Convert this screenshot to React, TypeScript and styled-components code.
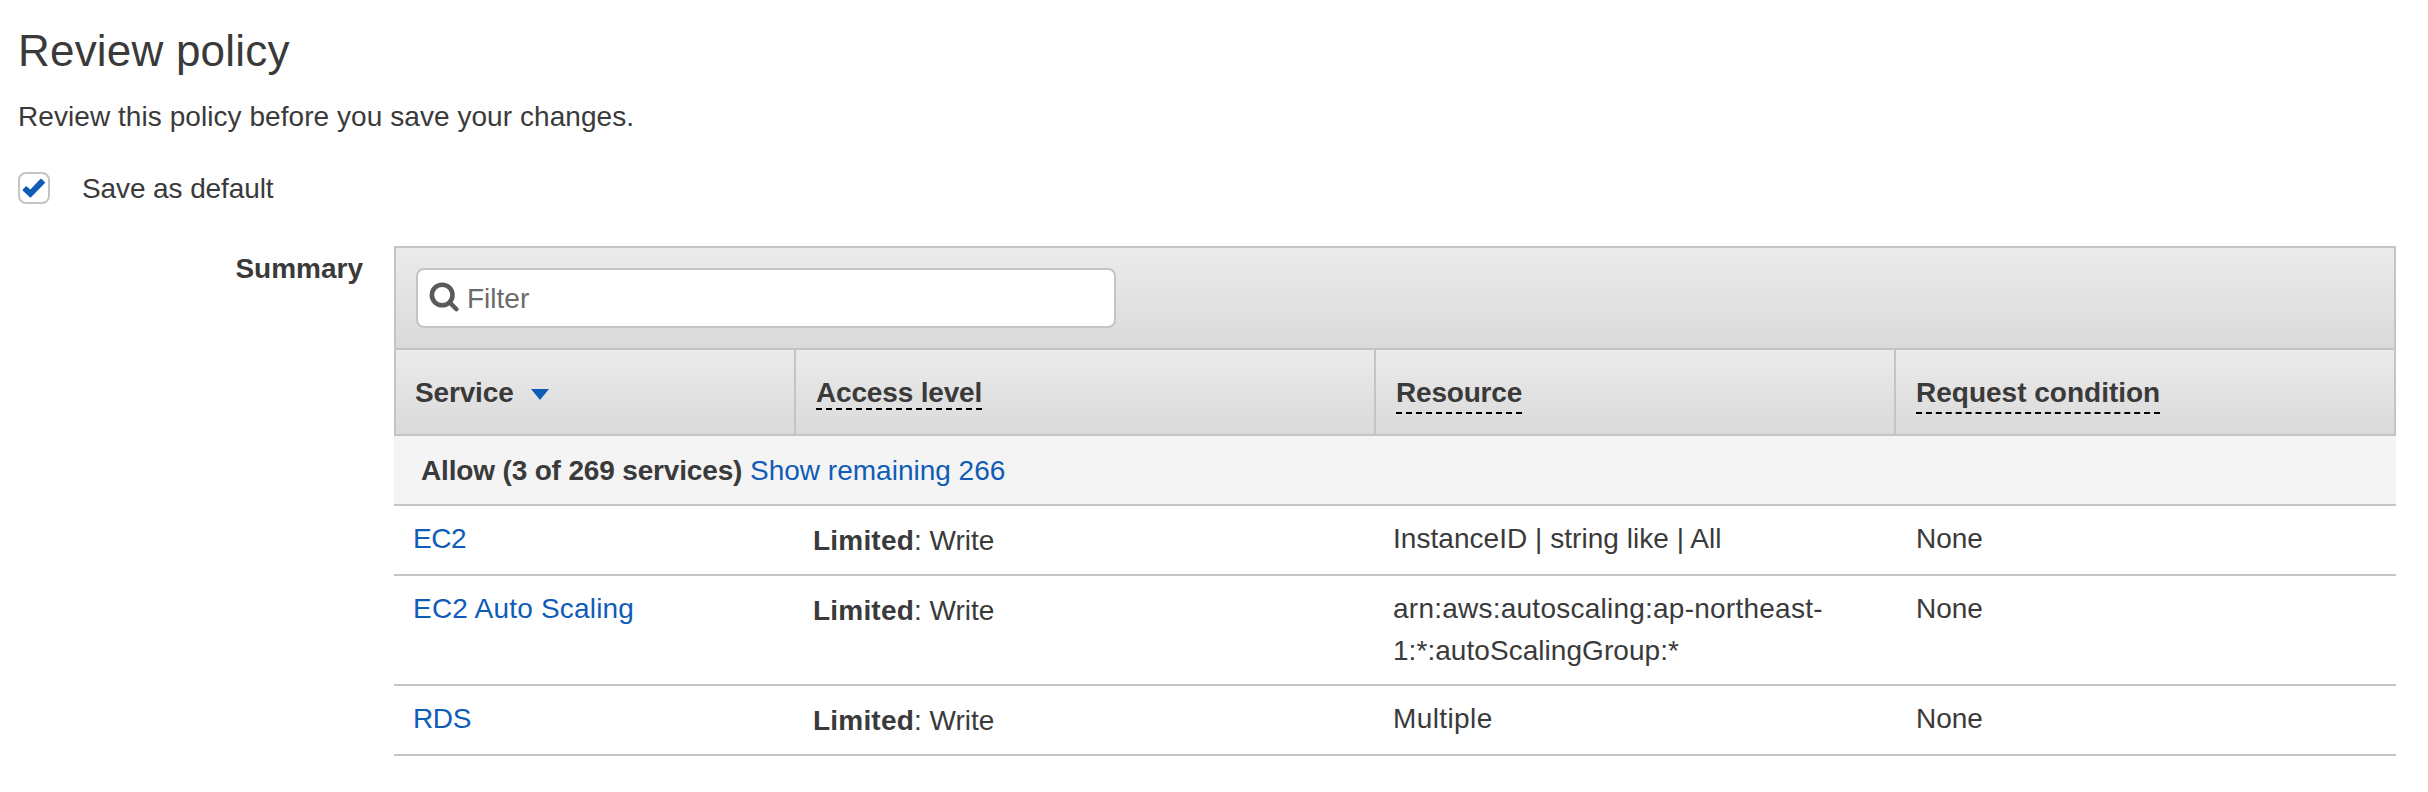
import React from "react";
import styled, { createGlobalStyle } from "styled-components";

const GlobalStyle = createGlobalStyle`
  *, *::before, *::after { box-sizing: border-box; }
  body {
    margin: 0;
    background: #fff;
    color: #3a3a3a;
    font-family: "Liberation Sans", Arial, sans-serif;
    font-size: 28px;
    line-height: 42px;
  }
`;

const line = "#c4c4c4";
const blue = "#0f5cb8";
const shade = "linear-gradient(to bottom, #ebebeb, #dadada)";

const Page = styled.main`
  width: 2428px;
  height: 792px;
  padding: 24px 32px 0 18px;
  overflow: hidden;
`;

const Text = styled.span<{ $track?: number }>`
  letter-spacing: ${(p) => p.$track ?? 0}px;
  white-space: nowrap;
`;

const Title = styled.h1`
  margin: 0;
  font-size: 44px;
  line-height: 54px;
  font-weight: 400;
`;

const Intro = styled.p`
  margin: 18px 0 0;
`;

const DefaultOption = styled.label`
  display: flex;
  align-items: flex-start;
  gap: 32px;
  margin-top: 30px;
`;

const Checkbox = styled.span`
  display: grid;
  place-items: center;
  width: 32px;
  height: 32px;
  margin-top: 4px;
  border: 2px solid ${line};
  border-radius: 8px;
`;

const Section = styled.section`
  display: grid;
  grid-template-columns: 345px 2002px;
  column-gap: 31px;
  margin-top: 36px;
`;

const SectionLabel = styled.div`
  padding-top: 2px;
  font-weight: 700;
  text-align: right;
`;

const Table = styled.div``;

const Toolbar = styled.div`
  height: 104px;
  padding: 20px;
  border: 2px solid ${line};
  background: ${shade};
`;

const FilterField = styled.div`
  display: flex;
  align-items: flex-start;
  width: 700px;
  height: 60px;
  padding: 8px 0 0 11px;
  gap: 8px;
  border: 2px solid ${line};
  border-radius: 8px;
  background: #fff;
  color: #6b6b6b;
`;

const SearchIcon = styled.svg`
  margin-top: 4px;
`;

const Columns = styled.div`
  display: grid;
  grid-template-columns: 400px 580px 520px 502px;
`;

const HeaderRow = styled(Columns)`
  height: 86px;
  border-bottom: 2px solid ${line};
  border-right: 2px solid ${line};
  background: ${shade};
  grid-template-columns: 400px 580px 520px 500px;
`;

const HeaderCell = styled.div<{ $left?: number }>`
  display: flex;
  align-items: flex-start;
  padding: 22px 20px 0 ${(p) => p.$left ?? 20}px;
  border-left: 2px solid ${line};
  font-weight: 700;
`;

const Hint = styled.span<{ $height: number; $width: number }>`
  height: ${(p) => p.$height}px;
  width: ${(p) => p.$width}px;
  border-bottom: 2px dashed #000;
  white-space: nowrap;
`;

const SortArrow = styled.svg`
  margin: 17px 0 0 17px;
`;

const GroupRow = styled.div`
  height: 70px;
  padding: 14px 27px 0;
  border-bottom: 2px solid ${line};
  background: #f4f4f4;
`;

const Row = styled(Columns)`
  padding: 12px 0;
  border-bottom: 2px solid ${line};
`;

const Cell = styled.div<{ $left?: number; $top?: number }>`
  padding: ${(p) => p.$top ?? 0}px 0 0 ${(p) => p.$left ?? 19}px;
`;

const Link = styled.a`
  color: ${blue};
`;

type Label = { text: string; track: number };
type Policy = { service: Label; resource: Label[] };

const policies: Policy[] = [
  {
    service: { text: "EC2", track: -0.5 },
    resource: [{ text: "InstanceID | string like | All", track: 0.04 }],
  },
  {
    service: { text: "EC2 Auto Scaling", track: 0.2 },
    resource: [
      { text: "arn:aws:autoscaling:ap-northeast-", track: 0.24 },
      { text: "1:*:autoScalingGroup:*", track: 0.05 },
    ],
  },
  {
    service: { text: "RDS", track: -0.4 },
    resource: [{ text: "Multiple", track: 0.4 }],
  },
];

// Single rows reserve 44px of content so the lowered access text fits.
export default function App() {
  return (
    <>
      <GlobalStyle />
      <Page>
        <Title><Text $track={0.2}>Review policy</Text></Title>
        <Intro><Text $track={0.06}>Review this policy before you save your changes.</Text></Intro>
        <DefaultOption>
          <Checkbox>
            <svg width="24" height="24" viewBox="0 0 24 24">
              <path
                d="M1.5 14.1 4.3 11.2 8.3 14.8 19 3.6 22.1 6.6 8.4 20.5Z"
                fill={blue}
                stroke={blue}
                strokeWidth="1.8"
                strokeLinejoin="round"
              />
            </svg>
          </Checkbox>
          <Text $track={-0.1}>Save as default</Text>
        </DefaultOption>
        <Section>
          <SectionLabel><Text>Summary</Text></SectionLabel>
          <Table>
            <Toolbar>
              <FilterField>
                <SearchIcon width="30" height="30" viewBox="0 0 30 30" fill="none" stroke="#5a5a5a" strokeLinecap="round">
                  <circle cx="13.2" cy="13" r="10.3" strokeWidth="4.6" />
                  <path d="M20.6 20.4 27.4 27.2" strokeWidth="4.4" />
                </SearchIcon>
                <Text>Filter</Text>
              </FilterField>
            </Toolbar>
            <HeaderRow>
              <HeaderCell $left={19}>
                <Text $track={-0.15}>Service</Text>
                <SortArrow width="18" height="11" viewBox="0 0 18 11">
                  <path d="M0 0H18L9 11Z" fill={blue} />
                </SortArrow>
              </HeaderCell>
              <HeaderCell><Hint $width={166} $height={38}><Text $track={-0.17}>Access level</Text></Hint></HeaderCell>
              <HeaderCell><Hint $width={126} $height={42}><Text $track={-0.2}>Resource</Text></Hint></HeaderCell>
              <HeaderCell><Hint $width={244} $height={42}><Text>Request condition</Text></Hint></HeaderCell>
            </HeaderRow>
            <GroupRow>
              <Text as="strong" $track={-0.16}>Allow (3 of 269 services)</Text> <Link><Text>Show remaining 266</Text></Link>
            </GroupRow>
            {policies.map((p) => (
              <Row key={p.service.text}>
                <Cell><Link><Text $track={p.service.track}>{p.service.text}</Text></Link></Cell>
                <Cell $top={2}><Text as="strong" $track={0.2}>Limited</Text><Text>: Write</Text></Cell>
                <Cell>
                  {p.resource.map((r) => (
                    <div key={r.text}><Text $track={r.track}>{r.text}</Text></div>
                  ))}
                </Cell>
                <Cell $left={22}><Text>None</Text></Cell>
              </Row>
            ))}
          </Table>
        </Section>
      </Page>
    </>
  );
}
